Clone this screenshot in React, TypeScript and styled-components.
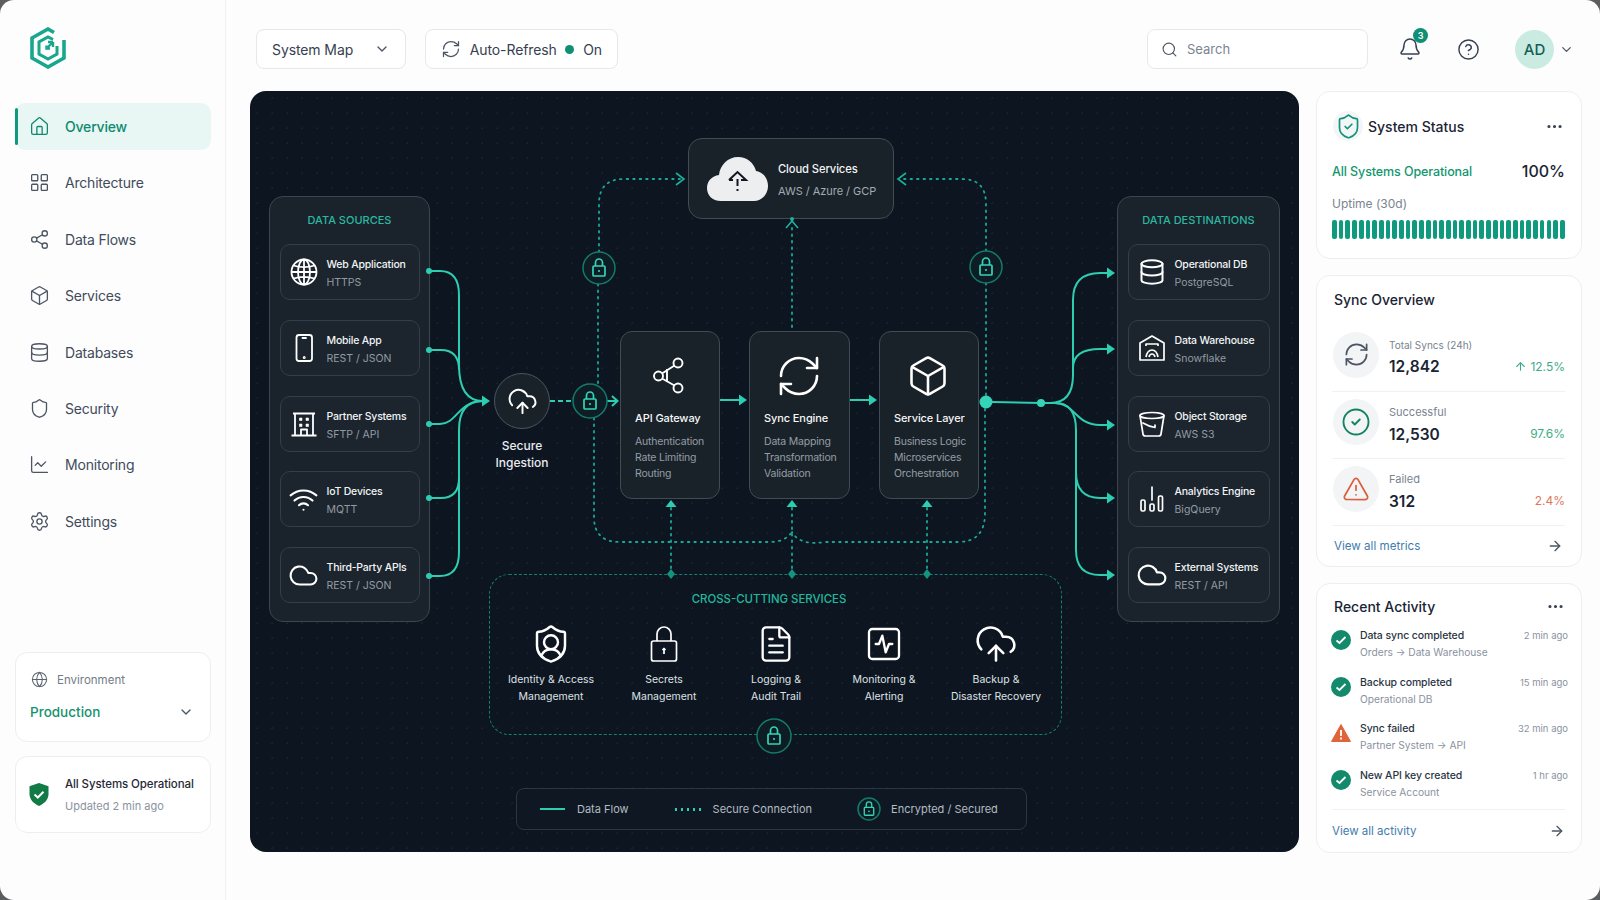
import React from 'react';
import styled, { createGlobalStyle } from 'styled-components';
import {
  ArrowRight, ArrowUp, Bell, Box, ChartLine, ChevronDown, CircleCheck, CircleHelp, Cloud, CloudUpload, Database,
  Ellipsis, FileText, Globe, House, LayoutGrid, RefreshCw, Search, Settings, Share2, Shield,
  ShieldCheck, ShieldUser, SquareActivity, TriangleAlert, Wifi,
} from 'lucide-react';

const GlobalStyle = createGlobalStyle`
  html, body { margin: 0; padding: 0; height: 100%; background: #5b5d5f; }
  body { font-family: Inter, "Noto Sans", sans-serif; overflow: hidden; }
  * { box-sizing: border-box; }
`;

const NAV = [
  { label: 'Overview', icon: House },
  { label: 'Architecture', icon: LayoutGrid },
  { label: 'Data Flows', icon: Share2 },
  { label: 'Services', icon: Box },
  { label: 'Databases', icon: Database },
  { label: 'Security', icon: Shield },
  { label: 'Monitoring', icon: ChartLine },
  { label: 'Settings', icon: Settings },
];

const GlobeIcon = () => (
  <svg width="30" height="30" viewBox="0 0 30 30" fill="none" stroke="currentColor" strokeWidth="1.800">
    <circle cx="15" cy="15" r="12.500" />
    <ellipse cx="15" cy="15" rx="6" ry="12.500" />
    <path d="M15 2.500v25M2.500 15h25M4.500 8.500c6 2 15 2 21 0M4.500 21.500c6-2 15-2 21 0" />
  </svg>
);

const PhoneIcon = () => (
  <svg width="30" height="30" viewBox="0 0 30 30" fill="none" stroke="currentColor" strokeWidth="1.800" strokeLinecap="round">
    <rect x="7.500" y="2" width="15.500" height="26" rx="2.500" />
    <path d="M13.500 5h3.500" />
    <circle cx="15.200" cy="24.500" r=".6" />
  </svg>
);

const BuildingIcon = () => (
  <svg width="30" height="30" viewBox="0 0 30 30" fill="none" stroke="currentColor" strokeWidth="1.800" strokeLinejoin="round">
    <path d="M4 4.500h22M6 4.500V26M24 4.500V26M2.500 26.500h25M12 26v-5.500h6V26" />
    <path d="M10.500 9h2.500v2.500h-2.500zM17 9h2.500v2.500H17zM10.500 15h2.500v2.500h-2.500zM17 15h2.500v2.500H17z" fill="currentColor" strokeWidth=".6" />
  </svg>
);

const WarehouseIcon = () => (
  <svg width="30" height="30" viewBox="0 0 30 30" fill="none" stroke="currentColor" strokeWidth="1.700" strokeLinejoin="round">
    <path d="M3 10 15 3l12 7v17H3z" />
    <path d="M9 13v-2h12v2M9 24c1-5 3-7 6-7s5 2 6 7M12 24c.5-2 1.500-3 3-3s2.500 1 3 3" />
  </svg>
);

const BucketIcon = () => (
  <svg width="30" height="30" viewBox="0 0 30 30" fill="none" stroke="currentColor" strokeWidth="1.700" strokeLinejoin="round" strokeLinecap="round">
    <ellipse cx="15" cy="6.500" rx="12" ry="3" />
    <path d="M3 6.500 6 25c.2 1.300 1 2 2.300 2h13.400c1.300 0 2.100-.7 2.300-2l3-18.500" />
    <path d="M6 14c5 3 9 4 12 4.500M18 18v-2" />
  </svg>
);

const BarsIcon = () => (
  <svg width="28" height="30" viewBox="0 0 28 30" fill="none" stroke="currentColor" strokeWidth="1.700" strokeLinejoin="round">
    <rect x="3" y="16" width="4" height="11" rx="1.500" />
    <rect x="12" y="20" width="4" height="7" rx="1.500" />
    <rect x="20.500" y="12" width="4" height="15" rx="1.500" />
    <path d="M14 3v13" strokeLinecap="round" />
  </svg>
);

const SOURCES = [
  { name: 'Web Application', sub: 'HTTPS', icon: <GlobeIcon /> },
  { name: 'Mobile App', sub: 'REST / JSON', icon: <PhoneIcon /> },
  { name: 'Partner Systems', sub: 'SFTP / API', icon: <BuildingIcon /> },
  { name: 'IoT Devices', sub: 'MQTT', icon: <Wifi size={31} strokeWidth={1.600} /> },
  { name: 'Third-Party APIs', sub: 'REST / JSON', icon: <Cloud size={31} strokeWidth={1.600} /> },
];

const DESTINATIONS = [
  { name: 'Operational DB', sub: 'PostgreSQL', icon: <Database size={28} strokeWidth={1.700} /> },
  { name: 'Data Warehouse', sub: 'Snowflake', icon: <WarehouseIcon /> },
  { name: 'Object Storage', sub: 'AWS S3', icon: <BucketIcon /> },
  { name: 'Analytics Engine', sub: 'BigQuery', icon: <BarsIcon /> },
  { name: 'External Systems', sub: 'REST / API', icon: <Cloud size={32} strokeWidth={1.600} /> },
];

const GatewayIcon = () => (
  <svg width="34" height="38" viewBox="0 0 34 38" fill="none" stroke="#fff" strokeWidth="1.900">
    <circle cx="6.500" cy="19" r="4.500" />
    <circle cx="26" cy="6" r="4.500" />
    <circle cx="26" cy="31" r="4.500" />
    <path d="M10 16.500 22.500 8.500M10 21.500 22.500 28.500M15 12v13" />
  </svg>
);

const SecretLockIcon = () => (
  <svg width="30" height="38" viewBox="0 0 30 38" fill="none" stroke="#fff" strokeWidth="1.700" strokeLinejoin="round">
    <rect x="2.500" y="16" width="25" height="20" rx="2" />
    <path d="M8 16V9a7 7 0 0 1 14 0v7" />
    <path d="M15 24v5M13.500 25l1.500-1.500 1.500 1.500" />
  </svg>
);

const CORE = [
  { title: 'API Gateway', left: 370, width: 100, icon: <GatewayIcon />, lines: ['Authentication', 'Rate Limiting', 'Routing'] },
  { title: 'Sync Engine', left: 499, width: 101, icon: <RefreshCw size={48} strokeWidth={1.300} />, lines: ['Data Mapping', 'Transformation', 'Validation'] },
  { title: 'Service Layer', left: 629, width: 100, icon: <Box size={44} strokeWidth={1.400} />, lines: ['Business Logic', 'Microservices', 'Orchestration'] },
];

const CROSS = [
  { top: 'Identity & Access', bottom: 'Management', icon: <ShieldUser size={42} strokeWidth={1.400} /> },
  { top: 'Secrets', bottom: 'Management', icon: <SecretLockIcon /> },
  { top: 'Logging &', bottom: 'Audit Trail', icon: <FileText size={40} strokeWidth={1.400} /> },
  { top: 'Monitoring &', bottom: 'Alerting', icon: <SquareActivity size={40} strokeWidth={1.400} /> },
  { top: 'Backup &', bottom: 'Disaster Recovery', icon: <CloudUpload size={44} strokeWidth={1.400} /> },
];

const SYNC = [
  { label: 'Total Syncs (24h)', value: '12,842', delta: '12.5%', tone: 'good', up: true, small: true },
  { label: 'Successful', value: '12,530', delta: '97.6%', tone: 'good' },
  { label: 'Failed', value: '312', delta: '2.4%', tone: 'bad' },
];

const ACTIVITY = [
  { title: 'Data sync completed', sub: 'Orders → Data Warehouse', time: '2 min ago', ok: true },
  { title: 'Backup completed', sub: 'Operational DB', time: '15 min ago', ok: true },
  { title: 'Sync failed', sub: 'Partner System → API', time: '32 min ago', ok: false },
  { title: 'New API key created', sub: 'Service Account', time: '1 hr ago', ok: true },
];

const Logo = () => (
  <svg width="38" height="42" viewBox="0 0 38 42" fill="none" stroke="#17a78d" strokeWidth="3.600" strokeLinejoin="miter">
    <path d="M25 5.500 19 2 3 11v20l16 9 16-9V13" />
    <path d="M24 12.500 19 10l-9 5v12l9 5 9-5v-8" strokeWidth="3" />
    <path d="M21 21.500h-3.500v-3M19 20l5-5M24 15v5M24 15h-5" strokeWidth="2.400" />
  </svg>
);

const LockBadge = ({ x, y, r = 16 }: { x: number; y: number; r?: number }) => (
  <g transform={`translate(${x} ${y})`}>
    <circle r={r} fill="#0e1c24" stroke="#137a6c" strokeWidth="1.500" />
    <g transform={`scale(${Math.min(1, r / 14)})`}>
      <g fill="none" stroke="#35d3b8" strokeWidth="1.700">
        <rect x="-6" y="-2" width="12" height="10" rx="1" />
        <path d="M-3.500-2v-3.500a3.500 3.500 0 0 1 7 0V-2" />
      </g>
      <circle cy="3" r="1.100" fill="#35d3b8" />
    </g>
  </g>
);

const Tip = ({ x, y, dir }: { x: number; y: number; dir: 'right' | 'up' }) =>
  dir === 'right'
    ? <path d={`M${x} ${y}l-8-5.500v11z`} fill="#2ccdb0" />
    : <path d={`M${x} ${y}l-5.500 7h11z`} fill="#2ccdb0" />;

const SOLID = [
  'M429 271H440Q459 271 459 295V365Q459 401 483 401',
  'M429 350H441Q459 350 459 370',
  'M429 424H440C457 424 458 401 483 401',
  'M429 498H441Q459 498 459 478',
  'M429 576H440Q459 576 459 552V430Q459 401 483 401',
  'M720 400H740',
  'M850 400H870',
  'M992 402 1041 403',
  'M1041 403H1050Q1073 403 1073 375V300Q1073 273 1100 273H1109',
  'M1073 368Q1073 349 1100 349H1109',
  'M1041 403H1055C1075 403 1075 425 1100 425H1109',
  'M1076 472Q1076 498 1100 498H1109',
  'M1041 403H1055Q1076 403 1076 430V550Q1076 575 1100 575H1109',
];

const DOTTED = [
  'M599 252V204Q599 179 624 179H680',
  'M598 284V384',
  'M594 418V517Q594 542 620 542H770Q785 542 792 532',
  'M986 251V204Q986 179 962 179H902',
  'M986 283V396',
  'M985 409V513Q985 542 958 542H825Q800 546 792 532',
  'M792 327V226',
  'M671 508V574',
  'M792 508V574',
  'M927 508V574',
];

// connectors and badges that run across the canvas, in page coordinates
const Wiring = () => (
  <WireLayer viewBox="250 91 1049 761">
    {DOTTED.map(d => <path key={d} d={d} fill="none" stroke="#1ba894" strokeWidth="1.800" strokeDasharray="1.500 5" strokeLinecap="round" />)}
    {SOLID.map(d => <path key={d} d={d} fill="none" stroke="#2ccdb0" strokeWidth="2" />)}
    {[271, 350, 424, 498, 576].map(y => <circle key={y} cx="429" cy={y} r="3" fill="#2ccdb0" />)}
    {[273, 349, 425, 498, 575].map(y => <Tip key={y} x={1115} y={y} dir="right" />)}
    <Tip x={490} y={401} dir="right" />
    <Tip x={747} y={400} dir="right" />
    <Tip x={877} y={400} dir="right" />
    <Tip x={671} y={500} dir="up" />
    <Tip x={792} y={500} dir="up" />
    <Tip x={927} y={500} dir="up" />
    <path d="M550 401H574" stroke="#2ccdb0" strokeWidth="2" strokeDasharray="5 3" />
    <path d="M607 401H617M612 396l5.500 5-5.500 5" fill="none" stroke="#2ccdb0" strokeWidth="2" />
    <path d="M676 173l8 6-8 6M906 173l-8 6 8 6M786 228l6-7 6 7" fill="none" stroke="#1fb09a" strokeWidth="1.600" />
    <circle cx="792" cy="219" r="2" fill="#1fb09a" />
    <circle cx="986" cy="402" r="6.500" fill="#35d3b8" />
    <circle cx="1041" cy="403" r="4" fill="#35d3b8" />
    {[671, 792, 927].map(x => <path key={x} d={`M${x} 569l4 5-4 5-4-5z`} fill="#159381" />)}
    <LockBadge x={599} y={268} />
    <LockBadge x={986} y={267} />
    <LockBadge x={590} y={401} r={17} />
    <LockBadge x={774} y={736} r={17} />
  </WireLayer>
);

export default function App() {
  return (
    <>
      <GlobalStyle />
      <Frame>
        <Sidebar>
          <LogoSlot><Logo /></LogoSlot>
          <Nav>
            {NAV.map(({ label, icon: Icon }, i) => (
              <NavItem key={label} $active={i === 0}>
                <Icon size={21} strokeWidth={1.500} />
                {label}
              </NavItem>
            ))}
          </Nav>
          <SideCards>
            <EnvCard>
              <EnvLabel><Globe size={17} strokeWidth={1.500} />Environment</EnvLabel>
              <EnvValue>Production<ChevronDown size={16} color="#4b5563" /></EnvValue>
            </EnvCard>
            <SideStatus>
              <svg width="20" height="23" viewBox="0 0 20 23">
                <path d="M10 0 19.500 3.200V11c0 5.500-4 9.500-9.500 12C4.500 20.500.5 16.500.5 11V3.200z" fill="#127a45" />
                <path d="M5.500 11.500 8.800 14.500 14.500 8.800" fill="none" stroke="#fff" strokeWidth="2" />
              </svg>
              <div>
                <SideStatusTitle>All Systems Operational</SideStatusTitle>
                <SideStatusSub>Updated 2 min ago</SideStatusSub>
              </div>
            </SideStatus>
          </SideCards>
        </Sidebar>

        <Main>
          <TopBar>
            <Control $width={150}>
              <ControlText>System Map</ControlText>
              <ChevronDown size={16} color="#4b5563" />
            </Control>
            <Control $width={193}>
              <RefreshCw size={20} strokeWidth={1.500} color="#4b5563" />
              <ControlText>Auto-Refresh</ControlText>
              <OnDot />
              <ControlText>On</ControlText>
            </Control>
            <SearchBox>
              <Search size={17} strokeWidth={1.600} color="#4b5563" />
              Search
            </SearchBox>
            <IconSlot>
              <Bell size={24} strokeWidth={1.500} color="#374151" />
              <Badge>3</Badge>
            </IconSlot>
            <IconSlot><CircleHelp size={23} strokeWidth={1.500} color="#374151" /></IconSlot>
            <Avatar>AD</Avatar>
            <ChevronDown size={15} color="#4b5563" />
          </TopBar>

          <Content>
            <Canvas>
              <Group $left={19} $width={161}>
                <GroupTitle>DATA SOURCES</GroupTitle>
                <Rows>
                  {SOURCES.map(s => <EndpointRow key={s.name} {...s} />)}
                </Rows>
              </Group>

              <Ingestion>
                <IngestionDisc><CloudUpload size={31} strokeWidth={1.500} /></IngestionDisc>
                <IngestionLabel>Secure<br />Ingestion</IngestionLabel>
              </Ingestion>

              <CloudCard>
                <svg width="61" height="44" viewBox="0 0 61 44">
                  <path d="M14 44C5 44 0 38 0 31c0-7 5-12 12-13C13 8 21 0 31 0c9 0 16 6 18 14 7 1 12 7 12 15 0 8-6 15-14 15z" fill="#eceef0" />
                  <path d="M22 23l8.500-8 8.500 8h-5M26 23h-4M30.500 22v7M30.500 32v2" fill="none" stroke="#11181f" strokeWidth="2" />
                </svg>
                <div>
                  <CloudTitle>Cloud Services</CloudTitle>
                  <CloudSub>AWS / Azure / GCP</CloudSub>
                </div>
              </CloudCard>

              {CORE.map(c => (
                <CoreCard key={c.title} $left={c.left} $width={c.width}>
                  <CoreIcon>{c.icon}</CoreIcon>
                  <CoreTitle>{c.title}</CoreTitle>
                  {c.lines.map(l => <CoreLine key={l}>{l}</CoreLine>)}
                </CoreCard>
              ))}

              <Group $left={867} $width={163}>
                <GroupTitle>DATA DESTINATIONS</GroupTitle>
                <Rows>
                  {DESTINATIONS.map(s => <EndpointRow key={s.name} {...s} />)}
                </Rows>
              </Group>

              <CrossPanel>
                <CrossTitle>CROSS-CUTTING SERVICES</CrossTitle>
                <CrossGrid>
                  {CROSS.map(c => (
                    <CrossItem key={c.top}>
                      <CrossIcon>{c.icon}</CrossIcon>
                      {c.top}<br />{c.bottom}
                    </CrossItem>
                  ))}
                </CrossGrid>
              </CrossPanel>

              <Legend>
                <LegendSolid />
                <LegendText $gap={44}>Data Flow</LegendText>
                <LegendDots />
                <LegendText $gap={45}>Secure Connection</LegendText>
                <svg width="24" height="24" viewBox="-12 -12 24 24"><LockBadge x={0} y={0} r={11} /></svg>
                <LegendText $gap={0}>Encrypted / Secured</LegendText>
              </Legend>

              <Wiring />
            </Canvas>

            <Rail>
              <Card $height={168}>
                <StatusHead>
                  <ShieldDisc><ShieldCheck size={27} strokeWidth={1.500} color="#13917a" /></ShieldDisc>
                  <CardTitle>System Status</CardTitle>
                  <Dots size={19} />
                </StatusHead>
                <StatusLine>
                  <StatusOk>All Systems Operational</StatusOk>
                  <StatusPct>100%</StatusPct>
                </StatusLine>
                <UptimeLabel>Uptime (30d)</UptimeLabel>
                <Uptime>
                  {Array.from({ length: 35 }, (_, i) => <UptimeBar key={i} />)}
                </Uptime>
              </Card>

              <Card $height={292}>
                <SyncHead><CardTitle>Sync Overview</CardTitle></SyncHead>
                {SYNC.map((s, i) => (
                  <SyncRow key={s.label}>
                    <SyncDisc>
                      {i === 0 && <RefreshCw size={27} strokeWidth={1.500} color="#4b5563" />}
                      {i === 1 && <CircleCheck size={30} strokeWidth={1.500} color="#13845f" />}
                      {i === 2 && <TriangleAlert size={28} strokeWidth={1.500} color="#d9603c" />}
                    </SyncDisc>
                    <SyncText>
                      <SyncLabel $small={s.small}>{s.label}</SyncLabel>
                      <SyncValue>{s.value}</SyncValue>
                    </SyncText>
                    <SyncDelta $tone={s.tone}>
                      {s.up && <ArrowUp size={13} />}
                      {s.delta}
                    </SyncDelta>
                  </SyncRow>
                ))}
                <MetricsLink>View all metrics<ArrowRight size={16} color="#4b5563" /></MetricsLink>
              </Card>

              <Card $height={270}>
                <ActivityHead>
                  <CardTitle>Recent Activity</CardTitle>
                  <Dots size={19} />
                </ActivityHead>
                <ActivityList>
                  {ACTIVITY.map(a => (
                    <ActivityRow key={a.title}>
                      {a.ok ? (
                        <svg width="20" height="20" viewBox="0 0 20 20">
                          <circle cx="10" cy="10" r="10" fill="#138a6c" />
                          <path d="M5.500 10.500 8.500 13l6-6" fill="none" stroke="#fff" strokeWidth="1.800" />
                        </svg>
                      ) : (
                        <svg width="20" height="20" viewBox="0 0 20 20">
                          <path d="M10 1.500 19.500 18.500H.5z" fill="#e0643a" stroke="#e0643a" strokeLinejoin="round" />
                          <path d="M10 7v6M10 14.500v2" stroke="#fff" strokeWidth="1.800" />
                        </svg>
                      )}
                      <ActivityText>
                        <ActivityTitle>{a.title}</ActivityTitle>
                        <ActivitySub>{a.sub}</ActivitySub>
                      </ActivityText>
                      <ActivityTime>{a.time}</ActivityTime>
                    </ActivityRow>
                  ))}
                </ActivityList>
                <ActivityLink>View all activity<ArrowRight size={16} color="#4b5563" /></ActivityLink>
              </Card>
            </Rail>
          </Content>
        </Main>
      </Frame>
    </>
  );
}

const EndpointRow = ({ name, sub, icon }: { name: string; sub: string; icon: React.ReactNode }) => (
  <Row>
    <RowIcon>{icon}</RowIcon>
    <RowText>
      <RowName>{name}</RowName>
      <RowSub>{sub}</RowSub>
    </RowText>
  </Row>
);

const Frame = styled.div`
  width: 1600px;
  height: 900px;
  display: flex;
  background: #fdfdfe;
  border-radius: 14px;
  overflow: hidden;
`;

const Sidebar = styled.aside`
  width: 226px;
  flex: none;
  display: flex;
  flex-direction: column;
  padding: 27px 14px 67px 15px;
  border-right: 1px solid #eff1f3;
`;

const LogoSlot = styled.div`
  height: 42px;
  padding-left: 14px;
  margin-bottom: 34px;
`;

const Nav = styled.nav`
  display: flex;
  flex-direction: column;
  gap: 9.400px;
`;

const NavItem = styled.div<{ $active?: boolean }>`
  position: relative;
  height: 47px;
  display: flex;
  align-items: center;
  gap: 15px;
  padding-left: 14px;
  font-size: 14px;
  font-weight: ${p => (p.$active ? 500 : 400)};
  letter-spacing: -0.2px;
  color: ${p => (p.$active ? '#0f8a70' : '#414b5a')};
  background: ${p => (p.$active ? '#e9f7f4' : 'transparent')};
  border-radius: 10px;

  svg { color: ${p => (p.$active ? '#0f8a70' : '#4b5563')}; }

  &::before {
    content: '';
    display: ${p => (p.$active ? 'block' : 'none')};
    position: absolute;
    left: 0;
    top: 5px;
    bottom: 5px;
    width: 3px;
    border-radius: 2px;
    background: #0f9a7f;
  }
`;

const SideCards = styled.div`
  margin-top: auto;
  display: flex;
  flex-direction: column;
  gap: 14px;
`;

const SideCard = styled.div`
  background: #fff;
  border: 1px solid #eceef1;
  border-radius: 12px;
`;

const EnvCard = styled(SideCard)`
  height: 90px;
  padding: 18px 16px 0 14px;
`;

const EnvLabel = styled.div`
  display: flex;
  align-items: center;
  gap: 9px;
  font-size: 11.500px;
  color: #737c89;

  svg { color: #59626f; margin-left: 1px; }
`;

const EnvValue = styled.div`
  display: flex;
  align-items: center;
  justify-content: space-between;
  margin-top: 16px;
  font-size: 13.500px;
  font-weight: 500;
  color: #12936d;
`;

const SideStatus = styled(SideCard)`
  height: 77px;
  display: flex;
  align-items: center;
  gap: 16px;
  padding-left: 13px;
`;

const SideStatusTitle = styled.div`
  font-size: 11.500px;
  font-weight: 500;
  color: #1f2937;
  letter-spacing: -0.1px;
  margin-bottom: 8px;
`;

const SideStatusSub = styled.div`
  font-size: 11px;
  color: #8b93a0;
`;

const Main = styled.main`
  flex: 1;
  display: flex;
  flex-direction: column;
  padding: 29px 18px 0 24px;
  min-width: 0;
`;

const TopBar = styled.header`
  height: 40px;
  display: flex;
  align-items: center;
  gap: 18px;
  padding: 0 8px 0 6px;
  margin-bottom: 22px;
`;

const Control = styled.div<{ $width: number }>`
  width: ${p => p.$width}px;
  height: 40px;
  display: flex;
  align-items: center;
  justify-content: space-between;
  padding: 0 15px;
  background: #fff;
  border: 1px solid #e5e8ec;
  border-radius: 8px;

  & + & { margin-left: 1px; }
`;

const ControlText = styled.span`
  font-size: 14px;
  color: #374151;
  letter-spacing: -0.1px;
  white-space: nowrap;
`;

const OnDot = styled.span`
  width: 9px;
  height: 9px;
  border-radius: 50%;
  background: #0f8f73;
`;

const SearchBox = styled.div`
  width: 221px;
  height: 40px;
  margin-left: auto;
  margin-right: 3px;
  display: flex;
  align-items: center;
  gap: 9px;
  padding: 0 13px;
  background: #fff;
  border: 1px solid #e5e8ec;
  border-radius: 8px;
  font-size: 13px;
  color: #7b8492;
`;

const IconSlot = styled.div`
  position: relative;
  width: 41px;
  height: 40px;
  display: flex;
  align-items: center;
  justify-content: center;
`;

const Badge = styled.span`
  position: absolute;
  top: -1px;
  right: 2px;
  width: 15px;
  height: 15px;
  border-radius: 50%;
  background: #0f8f73;
  color: #fff;
  font-size: 9px;
  font-weight: 600;
  display: flex;
  align-items: center;
  justify-content: center;
`;

const Avatar = styled.div`
  width: 39px;
  height: 39px;
  margin-left: 8px;
  margin-right: -13px;
  border-radius: 50%;
  background: #c9ebe2;
  color: #155e52;
  font-size: 15px;
  font-weight: 500;
  display: flex;
  align-items: center;
  justify-content: center;
`;

const Content = styled.div`
  display: flex;
  gap: 17px;
  align-items: flex-start;
`;

const Canvas = styled.section`
  position: relative;
  width: 1049px;
  height: 761px;
  flex: none;
  border-radius: 16px;
  background-color: #0d1520;
  background-image: radial-gradient(rgba(255, 255, 255, 0.05) 1px, transparent 1px);
  background-size: 15px 15px;
  color: #fff;
`;

const WireLayer = styled.svg`
  position: absolute;
  left: 0;
  top: 0;
  width: 1049px;
  height: 761px;
  pointer-events: none;
`;

const Group = styled.div<{ $left: number; $width: number }>`
  position: absolute;
  left: ${p => p.$left}px;
  top: 105px;
  width: ${p => p.$width}px;
  height: 426px;
  padding: 0 9.500px;
  background: #1a222b;
  border: 1px solid #3c4650;
  border-radius: 14px;
`;

const GroupTitle = styled.div`
  height: 47px;
  padding-bottom: 2px;
  display: flex;
  align-items: center;
  justify-content: center;
  font-size: 11px;
  font-weight: 500;
  color: #2bb8a0;
`;

const Rows = styled.div`
  display: flex;
  flex-direction: column;
  gap: 19.750px;
`;

const Row = styled.div`
  height: 56px;
  display: flex;
  align-items: center;
  background: #1c252d;
  border: 1px solid #343e48;
  border-radius: 10px;
`;

const RowIcon = styled.div`
  width: 46px;
  flex: none;
  display: flex;
  justify-content: center;
  color: #fff;
`;

const RowText = styled.div`
  padding-top: 3px;
`;

const RowName = styled.div`
  font-size: 10.500px;
  font-weight: 500;
  color: #f1f4f6;
  letter-spacing: -0.2px;
  margin-bottom: 5px;
`;

const RowSub = styled.div`
  font-size: 10.500px;
  color: #929ba5;
`;

const Ingestion = styled.div`
  position: absolute;
  left: 232px;
  top: 282px;
  width: 80px;
  display: flex;
  flex-direction: column;
  align-items: center;
`;

const IngestionDisc = styled.div`
  width: 56px;
  height: 56px;
  border-radius: 50%;
  background: #1a2229;
  border: 1.500px solid #4a5560;
  display: flex;
  align-items: center;
  justify-content: center;
`;

const IngestionLabel = styled.div`
  margin-top: 8px;
  font-size: 12px;
  font-weight: 500;
  line-height: 17px;
  text-align: center;
  color: #e8ecef;
`;

const CloudCard = styled.div`
  position: absolute;
  left: 438px;
  top: 47px;
  width: 206px;
  height: 81px;
  display: flex;
  align-items: center;
  gap: 10px;
  padding-left: 18px;
  background: #1a2229;
  border: 1px solid #414b54;
  border-radius: 14px;
`;

const CloudTitle = styled.div`
  font-size: 11.200px;
  font-weight: 500;
  letter-spacing: -0.1px;
  color: #f1f4f6;
  margin: 2px 0 8px;
`;

const CloudSub = styled.div`
  font-size: 11px;
  color: #a2abb4;
  letter-spacing: -0.05px;
`;

const CoreCard = styled.div<{ $left: number; $width: number }>`
  position: absolute;
  left: ${p => p.$left}px;
  top: 240px;
  width: ${p => p.$width}px;
  height: 168px;
  padding: 21px 0 0 14px;
  background: #1a2229;
  border: 1px solid #414b54;
  border-radius: 12px;
`;

const CoreIcon = styled.div`
  height: 46px;
  margin: 0 0 11px -16px;
  display: flex;
  align-items: center;
  justify-content: center;
  color: #fff;
`;

const CoreTitle = styled.div`
  font-size: 11px;
  font-weight: 500;
  line-height: 16px;
  letter-spacing: -0.1px;
  color: #f5f7f8;
  margin-bottom: 8px;
`;

const CoreLine = styled.div`
  font-size: 10.500px;
  line-height: 16px;
  color: #949da7;
  letter-spacing: -0.2px;
`;

const CrossPanel = styled.div`
  position: absolute;
  left: 239px;
  top: 483px;
  width: 573px;
  height: 161px;
  border: 1.500px dashed #15806f;
  border-radius: 20px;
`;

const CrossTitle = styled.div`
  height: 47px;
  padding-right: 13px;
  display: flex;
  align-items: center;
  justify-content: center;
  font-size: 11.400px;
  font-weight: 500;
  color: #23b89e;
`;

const CrossGrid = styled.div`
  display: grid;
  grid-template-columns: 112px 114px 110px 106px 118px;
  padding-left: 5px;
`;

const CrossItem = styled.div`
  font-size: 10.500px;
  line-height: 16.500px;
  text-align: center;
  color: #dde2e6;
  white-space: nowrap;
`;

const CrossIcon = styled.div`
  height: 44px;
  margin-bottom: 6px;
  display: flex;
  align-items: center;
  justify-content: center;
  color: #fff;
`;

const Legend = styled.div`
  position: absolute;
  left: 266px;
  top: 697px;
  width: 511px;
  height: 42px;
  display: flex;
  align-items: center;
  padding-left: 23px;
  border: 1px solid #2c3640;
  border-radius: 8px;
  background: #0f1822;
`;

const LegendSolid = styled.span`
  width: 25px;
  height: 2px;
  margin-right: 12px;
  background: #2ccdb0;
`;

const LegendDots = styled.span`
  width: 28px;
  height: 3px;
  margin-right: 12px;
  background-image: radial-gradient(circle, #2ccdb0 1.200px, transparent 1.500px);
  background-size: 6px 3px;
`;

const LegendText = styled.span<{ $gap: number }>`
  font-size: 11px;
  color: #b3bbc3;
  margin-left: ${p => (p.$gap ? 0 : 10)}px;
  margin-right: ${p => p.$gap}px;
`;

const Rail = styled.div`
  width: 266px;
  flex: none;
  display: flex;
  flex-direction: column;
  gap: 16px;
`;

const Card = styled.div<{ $height: number }>`
  height: ${p => p.$height}px;
  display: flex;
  flex-direction: column;
  padding: 0 16px 0 15px;
  background: #fff;
  border: 1px solid #eceef1;
  border-radius: 14px;
`;

const CardTitle = styled.div`
  font-size: 14px;
  font-weight: 500;
  color: #1a2433;
`;

const Dots = styled(Ellipsis)`
  margin-left: auto;
  color: #374151;
`;

const StatusHead = styled.div`
  height: 46px;
  margin-top: 11px;
  display: flex;
  align-items: center;
  gap: 5px;
  padding-right: 1px;
`;

const ShieldDisc = styled.div`
  width: 30px;
  height: 30px;
  margin-left: 1px;
  border-radius: 50%;
  background: #f3f6f6;
  display: flex;
  align-items: center;
  justify-content: center;
`;

const StatusLine = styled.div`
  display: flex;
  align-items: center;
  justify-content: space-between;
  margin-top: 9px;
  height: 26px;
`;

const StatusOk = styled.span`
  font-size: 12.500px;
  font-weight: 500;
  letter-spacing: -0.1px;
  color: #12966f;
`;

const StatusPct = styled.span`
  font-size: 16px;
  font-weight: 500;
  color: #1a2433;
`;

const UptimeLabel = styled.div`
  margin-top: 12px;
  font-size: 12px;
  color: #7a8390;
`;

const Uptime = styled.div`
  display: flex;
  justify-content: space-between;
  margin-top: 9px;
`;

const UptimeBar = styled.span`
  width: 4.700px;
  height: 19px;
  border-radius: 2px;
  background: #0e9a7c;
`;

const SyncHead = styled.div`
  height: 24px;
  margin-top: 11px;
  margin-bottom: 14px;
  padding-left: 2px;
  display: flex;
  align-items: center;
`;

const SyncRow = styled.div`
  height: 67px;
  flex: none;
  display: flex;
  align-items: center;
  gap: 10px;
  padding-bottom: 7px;
  border-bottom: 1px solid #eff1f3;
`;

const SyncDisc = styled.div`
  width: 46px;
  height: 46px;
  flex: none;
  margin-left: 1px;
  border-radius: 50%;
  background: #f2f4f5;
  display: flex;
  align-items: center;
  justify-content: center;
`;

const SyncText = styled.div`
  flex: 1;
  padding-top: 6px;
`;

const SyncLabel = styled.div<{ $small?: boolean }>`
  font-size: ${p => (p.$small ? 10 : 11)}px;
  color: #7a8390;
  margin-bottom: 6px;
`;

const SyncValue = styled.div`
  font-size: 15.500px;
  font-weight: 600;
  color: #1a2433;
`;

const SyncDelta = styled.div<{ $tone: string }>`
  align-self: flex-end;
  margin-bottom: 10px;
  display: flex;
  align-items: center;
  gap: 3px;
  font-size: 12px;
  color: ${p => (p.$tone === 'bad' ? '#e0765a' : '#3dab87')};
`;

const CardLink = styled.div`
  flex: 1;
  display: flex;
  align-items: center;
  justify-content: space-between;
  color: #3f7cad;
`;

const MetricsLink = styled(CardLink)`
  padding: 0 2px;
  font-size: 11.600px;
`;

const ActivityHead = styled.div`
  height: 24px;
  margin-top: 10px;
  padding-left: 2px;
  display: flex;
  align-items: center;
`;

const ActivityList = styled.div`
  display: flex;
  flex-direction: column;
  margin-top: 4px;
`;

const ActivityRow = styled.div`
  height: 46.700px;
  display: flex;
  align-items: flex-start;
  gap: 9px;
  padding: 7px 0 0;
  margin-left: -1px;
  margin-right: -3px;

  svg { flex: none; margin-top: 1px; }
`;

const ActivityText = styled.div`
  flex: 1;
`;

const ActivityTitle = styled.div`
  font-size: 10.500px;
  font-weight: 500;
  color: #2a3544;
  letter-spacing: -0.1px;
  margin-bottom: 4px;
`;

const ActivitySub = styled.div`
  font-size: 10.200px;
  color: #8a92a0;
`;

const ActivityTime = styled.div`
  font-size: 9.500px;
  color: #8a92a0;
  padding-top: 1px;
`;

const ActivityLink = styled(CardLink)`
  padding-right: 0;
  font-size: 11.500px;
  border-top: 1px solid #eff1f3;
`;
